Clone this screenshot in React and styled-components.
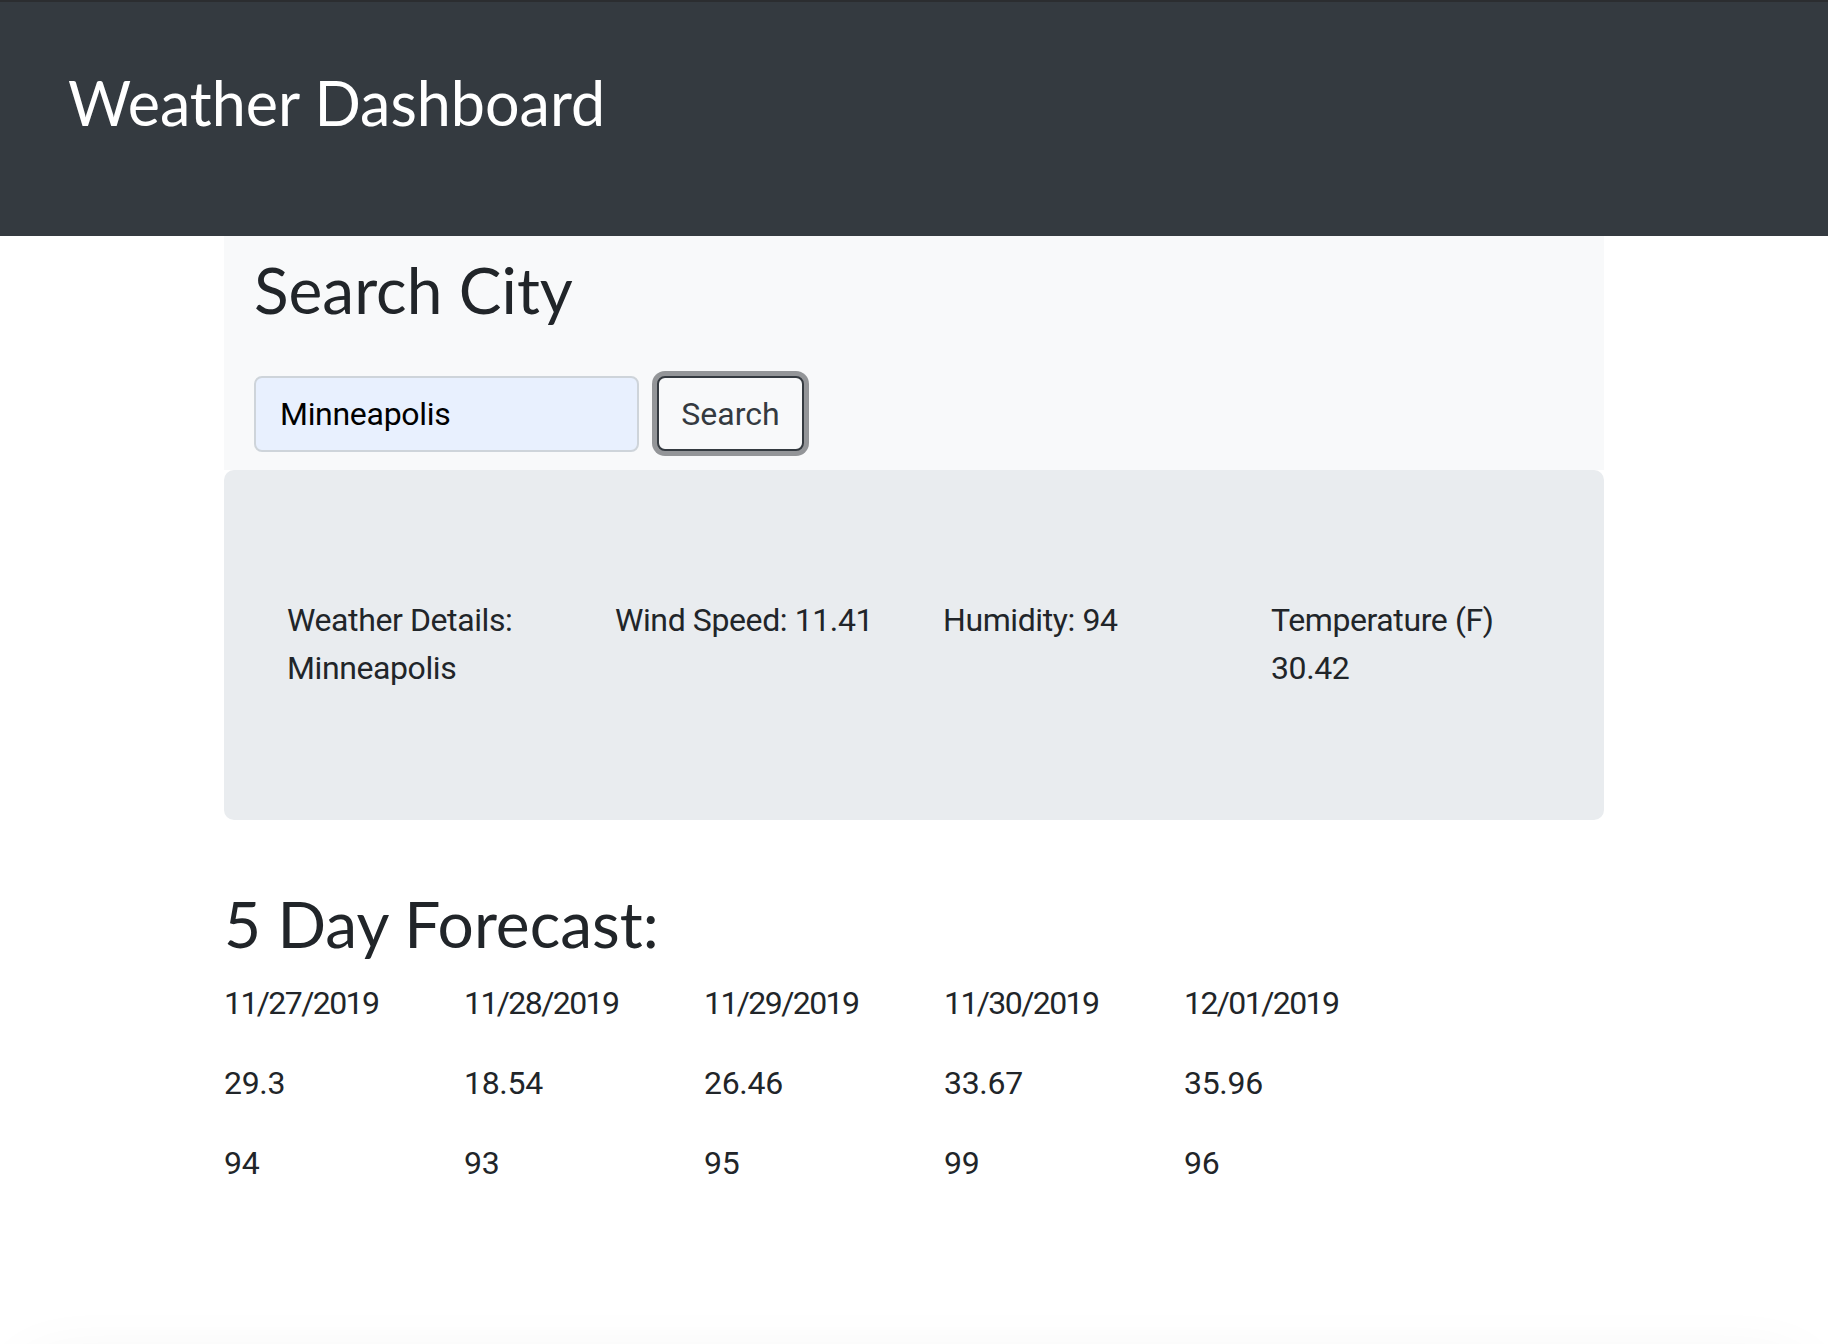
import React from "react";
import styled, { createGlobalStyle } from "styled-components";

const GlobalStyle = createGlobalStyle`
  body {
    margin: 0;
    background: #ffffff;
    color: #212529;
    font-family: Roboto, "Noto Sans", sans-serif;
    font-size: 32px;
    line-height: 48px;
  }
  * {
    box-sizing: border-box;
  }
`;

const Header = styled.header`
  height: 236px;
  background: #343a40;
  border-top: 2px solid #2b2d30;
  padding: 64px 68px 0;
`;

const Title = styled.h2`
  margin: 0;
  font-family: Lato, sans-serif;
  font-weight: 400;
  font-size: 61px;
  line-height: 1.2;
  color: #ffffff;
`;

const Container = styled.main`
  width: 1440px;
  margin: 0 auto;
  padding: 0 30px;
`;

const SearchSection = styled.section`
  background: #f8f9fa;
  padding: 16px 30px 18px;
`;

const Heading = styled.h2`
  margin: 0 0 ${(p) => p.$gap || 16}px;
  font-family: Lato, sans-serif;
  font-weight: 400;
  font-size: 64px;
  line-height: 1.2;
  color: #212529;
`;

const SearchForm = styled.form`
  display: flex;
  align-items: center;
  gap: 18px;
`;

const CityInput = styled.input`
  width: 385px;
  height: 76px;
  padding: 0 24px;
  border: 2px solid #ced4da;
  border-radius: 8px;
  background: #e8f0fe;
  font-family: Roboto, "Noto Sans", sans-serif;
  font-size: 32px;
  letter-spacing: -0.3px;
  color: #000000;
  outline: none;
`;

const SearchButton = styled.button`
  width: 147px;
  height: 75px;
  border: 2px solid #343a40;
  border-radius: 8px;
  background: #f8f9fa;
  box-shadow: 0 0 0 5px #939598;
  font-family: Roboto, "Noto Sans", sans-serif;
  font-size: 32px;
  color: #343a40;
  cursor: pointer;
`;

const DetailsPanel = styled.section`
  display: grid;
  grid-template-columns: repeat(4, 328px);
  align-items: start;
  background: #e9ecef;
  border-radius: 10px;
  padding: 126px 0 128px 63px;
  margin-bottom: 66px;
`;

const Detail = styled.div`
  padding-right: 16px;
  letter-spacing: -0.4px;
`;

const ForecastGrid = styled.div`
  display: grid;
  grid-template-columns: repeat(5, 240px);
`;

const Day = styled.div``;

const Value = styled.p`
  margin: 0 0 32px;
  letter-spacing: ${(p) => (p.$tight ? "-1.6px" : "-0.3px")};
`;

const Footer = styled.footer`
  height: 120px;
  margin: 150px 30px 0;
  box-shadow: 0 0 70px rgba(0, 0, 0, 0.07);
`;

const forecast = [
  { date: "11/27/2019", temp: "29.3", humidity: "94" },
  { date: "11/28/2019", temp: "18.54", humidity: "93" },
  { date: "11/29/2019", temp: "26.46", humidity: "95" },
  { date: "11/30/2019", temp: "33.67", humidity: "99" },
  { date: "12/01/2019", temp: "35.96", humidity: "96" },
];

function App() {
  return (
    <>
      <GlobalStyle />
      <Header>
        <Title>Weather Dashboard</Title>
      </Header>
      <Container>
        <SearchSection>
          <Heading $gap={47}>Search City</Heading>
          <SearchForm onSubmit={(e) => e.preventDefault()}>
            <CityInput defaultValue="Minneapolis" />
            <SearchButton type="submit">Search</SearchButton>
          </SearchForm>
        </SearchSection>
        <DetailsPanel>
          <Detail>
            Weather Details:
            <br />
            Minneapolis
          </Detail>
          <Detail>Wind Speed: 11.41</Detail>
          <Detail>Humidity: 94</Detail>
          <Detail>
            Temperature (F)
            <br />
            30.42
          </Detail>
        </DetailsPanel>
        <Heading>5 Day Forecast:</Heading>
        <ForecastGrid>
          {forecast.map((d) => (
            <Day key={d.date}>
              <Value $tight>{d.date}</Value>
              <Value>{d.temp}</Value>
              <Value>{d.humidity}</Value>
            </Day>
          ))}
        </ForecastGrid>
      </Container>
      <Footer />
    </>
  );
}

export default App;
